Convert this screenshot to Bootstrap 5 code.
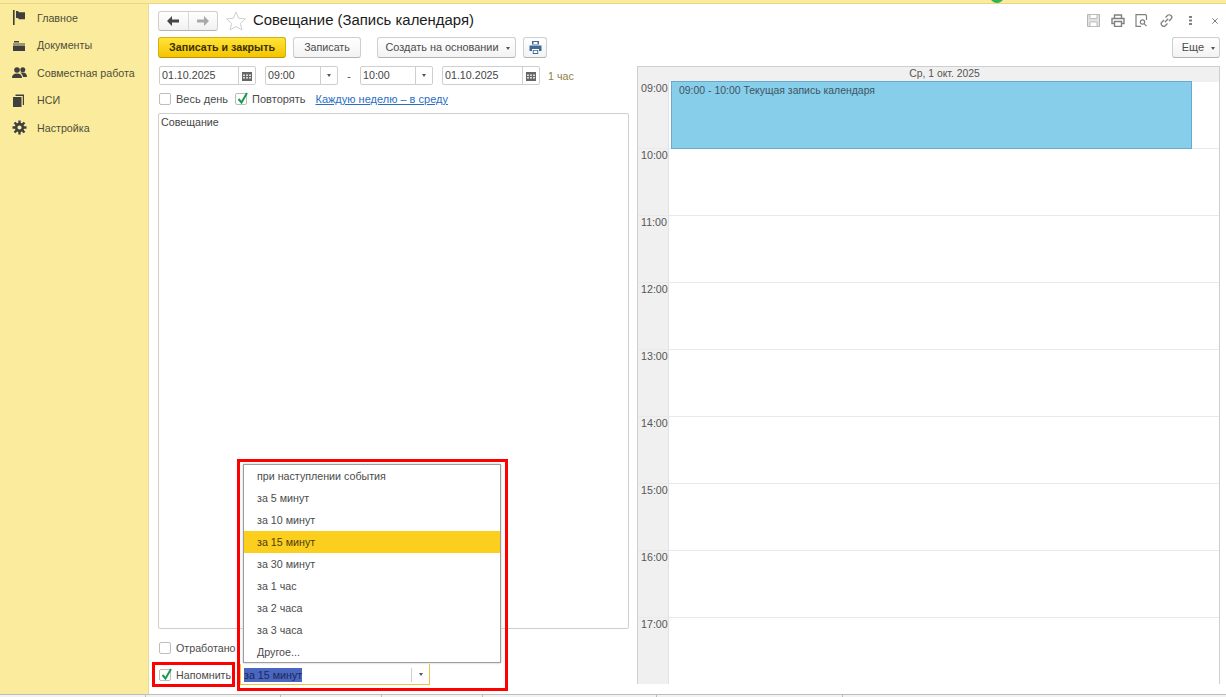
<!DOCTYPE html>
<html lang="ru">
<head>
  <meta charset="UTF-8" />
  <meta name="viewport" content="width=device-width, initial-scale=1" />
  <title>Совещание (Запись календаря)</title>
  <link href="https://cdn.jsdelivr.net/npm/bootstrap@5.3.3/dist/css/bootstrap.min.css" rel="stylesheet" />
  <style>
    html, body { height: 100%; }
    body {
      background: #fff;
      color: #4b4b4b;
      font-family: "Liberation Sans", Arial, sans-serif;
      font-size: 10.7px;
      line-height: 14px;
      overflow: hidden;
    }
    .app-shell { height: 697px; width: 1226px; }
    .top-strip {
      height: 4px;
      flex: none;
      background: #fbec9d;
      border-bottom: 1px solid #e6d68e;
      position: relative;
      overflow: hidden;
    }
    .top-dot {
      position: absolute;
      left: 990px;
      top: -11px;
      width: 14px;
      height: 14px;
      border-radius: 50%;
      background: #2fb457;
    }
    .work-area { height: 690px; flex: none; }
    .side-panel {
      width: 149px;
      flex: none;
      background: #fbec9d;
      border-right: 1px solid #e8dc9c;
    }
    .side-item {
      height: 27.5px;
      padding-left: 12px;
      color: #4e4c3c;
      text-decoration: none;
    }
    .side-item svg { width: 15px; height: 15px; margin-right: 10px; flex: none; }
    .form-pane { padding: 7px 6px 0 9px; min-width: 0; }
    .title-row { height: 19px; margin-bottom: 7px; }
    .nav-pair {
      width: 60px;
      height: 20px;
      border: 1px solid #cfcfcf;
      border-bottom-color: #b5b5b5;
      border-radius: 3px;
      background: linear-gradient(#fff, #f1f1f1);
    }
    .nav-pair span { flex: 1; }
    .nav-pair span + span { border-left: 1px solid #d8d8d8; }
    .star-mark { margin: 0 7px 0 8px; }
    .form-title { font-size: 14.9px; line-height: 19px; color: #1c1c1c; font-weight: 400; margin: 0; }
    .tool-icons { height: 14px; }
    .tool-icons svg { display: block; flex: none; }
    .gap-print { margin-left: 11px; }
    .gap-preview { margin-left: 10px; }
    .gap-link { margin-left: 12px; }
    .gap-kebab { margin-left: 16px; }
    .gap-close { margin-left: 20px; margin-right: 2px; }
    .tool-row { height: 21px; margin-bottom: 8px; }
    .btn-plain {
      height: 21px;
      padding: 0;
      font-size: 10.7px;
      line-height: 19px;
      color: #4b4b4b;
      background: linear-gradient(#fff, #f3f3f3);
      border: 1px solid #cfcfcf;
      border-bottom-color: #b3b3b3;
      border-radius: 3px;
      white-space: nowrap;
    }
    .btn-save {
      width: 128px;
      font-weight: 700;
      color: #3a3000;
      background: linear-gradient(#ffe43a, #f4c400);
      border-color: #d6ae10;
      border-bottom-color: #b8940a;
    }
    .btn-write { width: 68px; margin-left: 7px; }
    .btn-create { width: 139px; margin-left: 16px; font-size: 10.9px; padding-left: 2px; }
    .btn-print { width: 24px; margin-left: 7px; }
    .btn-more { width: 48px; padding-left: 5px; font-size: 11px; }
    .caret-down {
      display: inline-block;
      border-left: 2.5px solid transparent;
      border-right: 2.5px solid transparent;
      border-top: 3px solid #555;
      vertical-align: middle;
    }
    .content-row { height: 618px; }
    .edit-col { width: 471px; flex: none; margin-right: 8px; position: relative; }
    .field-row { height: 19px; margin-left: 1px; }
    .field-box {
      height: 19px;
      flex: none;
      border: 1px solid #cfcfcf;
      border-radius: 2px;
      color: #444;
      line-height: 17px;
      padding-left: 2px;
      background: #fff;
    }
    .field-box b {
      font-weight: 400;
      flex: none;
      width: 17px;
      margin-left: auto;
      height: 100%;
      border-left: 1px solid #cfcfcf;
      display: flex;
      align-items: center;
      justify-content: center;
    }
    .date-box { width: 97px; }
    .date-end { width: 98px; margin-left: 9px; }
    .time-box { width: 73px; }
    .time-start { margin-left: 9px; }
    .gap-dash { width: 22px; text-align: center; flex: none; }
    .span-note { color: #8c8248; margin-left: 8px; }
    .check-row { height: 14px; margin: 7px 0 7px 1px; font-size: 11px; }
    .check-mark {
      width: 12px;
      height: 12px;
      border: 1px solid #bdbdbd;
      border-radius: 2px;
      background: #fff;
      position: relative;
      display: inline-block;
      flex: none;
      margin-right: 5px;
    }
    .check-mark svg { position: absolute; left: 0; top: -3px; }
    .check-second { margin-left: 7px; }
    .repeat-link { color: #2a6fc4; text-decoration: underline; margin-left: 10px; }
    .note-area {
      height: 516px;
      flex: none;
      border: 1px solid #cfcfcf;
      border-radius: 2px;
      padding: 1px 2px;
      color: #444;
    }
    .worked-row { height: 14px; margin: 12px 0 12px 1px; }
    .remind-row { height: 15px; margin-left: 1px; }
    .remind-label { width: 64px; flex: none; }
    .remind-field {
      width: 190px;
      height: 21px;
      flex: none;
      padding-left: 3px;
      padding-top: 1px;
      border-bottom: 1px solid #f0c040;
      border-right: 1px solid #f0c040;
      border-left: 1px solid #f0c040;
    }
    .remind-field em { font-style: normal; background: #4a66c0; color: #1c2a58; }
    .remind-field b {
      font-weight: 400;
      margin-left: auto;
      width: 18px;
      height: 14px;
      border-left: 1px solid #cfcfcf;
      display: flex;
      align-items: center;
      justify-content: center;
    }
    /* popup list and the red marks lie over the form */
    .choice-list {
      position: absolute;
      left: 85px;
      top: 398px;
      width: 258px;
      height: 199px;
      background: #fff;
      border: 1px solid #9e9e9e;
      box-shadow: 0 0 2px #bbb;
      z-index: 3;
    }
    .choice-item { height: 22px; line-height: 22px; padding-left: 13px; color: #4b4b4b; }
    .choice-item.active-choice { background: #fccf1f; color: #4a3c10; }
    .red-frame { position: absolute; border: 3px solid #f00; z-index: 4; pointer-events: none; }
    .red-list { left: 79px; top: 393px; width: 271px; height: 232px; }
    .red-check { left: -6px; top: 596px; width: 83px; height: 25px; }
    .plan-col { flex: 1; min-width: 0; border: 1px solid #cfcfcf; border-bottom: 0; height: 618px; }
    .plan-head {
      height: 15px;
      padding-left: 32px;
      background: #f0f0f0;
      text-align: center;
      font-size: 10.4px;
      line-height: 14px;
      color: #555;
    }
    .plan-hour { height: 67px; position: relative; border-bottom: 1px solid #e9e9e9; }
    .plan-hour:last-child { border-bottom: 0; height: 66px; }
    .hour-label {
      width: 31px;
      flex: none;
      background: #f0f0f0;
      border-right: 1px solid #e2e2e2;
      padding: 0 0 0 3px;
      line-height: 13px;
      color: #555;
    }
    .plan-cell { flex: 1; position: relative; }
    .event-block {
      position: absolute;
      left: 2px;
      top: -1px;
      width: 521px;
      height: 68px;
      background: #87ceeb;
      border: 1px solid #6aa9cf;
      padding: 2px 7px;
      font-size: 10.45px;
      color: #3f5560;
      white-space: nowrap;
    }
    .bottom-strip {
      height: 3px;
      flex: none;
      border-top: 1px solid #bdbdbd;
      background: #f3f3f3;
    }
    .bottom-tab { border-right: 1px solid #bdbdbd; flex: none; }
    .tab-a { width: 146px; }
    .tab-b { width: 135px; }
    .tab-c { width: 101px; }
    .tab-d { width: 174px; }
    .tab-e { width: 186px; }
  </style>
</head>
<body>
  <div class="app-shell d-flex flex-column">
    <div class="top-strip"><span class="top-dot"></span></div>

    <div class="work-area d-flex">
      <nav class="side-panel">
        <a href="#" class="side-item d-flex align-items-center">
          <svg viewBox="0 0 15 15"><path fill="#3f3f3f" d="M1 0h1.600v15H1zM4 1h2l1 1.200h6v7H7L6 8H4z"/></svg>Главное</a>
        <a href="#" class="side-item d-flex align-items-center">
          <svg viewBox="0 0 15 15"><path fill="#3f3f3f" d="M2 3h5v1.500H2zM1 5.500h12v1H1zM1 7.500h12V13H1z"/></svg>Документы</a>
        <a href="#" class="side-item d-flex align-items-center">
          <svg viewBox="0 0 15 15"><circle cx="5" cy="5" r="2.800" fill="#3f3f3f"/><circle cx="10.800" cy="4.800" r="2.500" fill="#3f3f3f"/><path fill="#3f3f3f" d="M0 13c0-3 1.500-4.500 5-4.500S10 10 10 13zM8.200 7.800c.8-.3 1.600-.4 2.600-.4 2.900 0 4.200 1.500 4.200 4.600h-4c-.3-1.900-1.200-3.300-2.800-4.200z"/></svg>Совместная работа</a>
        <a href="#" class="side-item d-flex align-items-center">
          <svg viewBox="0 0 15 15"><path fill="#3f3f3f" d="M1 4h8.500v10H1zM3.500 1.500H12V12h-1.200V3H3.500z"/></svg>НСИ</a>
        <a href="#" class="side-item d-flex align-items-center">
          <svg viewBox="0 0 15 15"><circle cx="7.500" cy="7.500" r="3.400" fill="none" stroke="#3f3f3f" stroke-width="2.600"/><path stroke="#3f3f3f" stroke-width="2.400" d="M7.500.5v3M7.500 11.500v3M.5 7.500h3M11.500 7.500h3M2.500 2.500l2.100 2.100M10.400 10.400l2.100 2.100M12.500 2.500l-2.100 2.100M4.600 10.400l-2.100 2.100"/></svg>Настройка</a>
      </nav>

      <main class="form-pane flex-grow-1">
        <div class="title-row d-flex align-items-center">
          <div class="nav-pair d-flex align-items-stretch">
            <span class="d-flex align-items-center justify-content-center">
              <svg width="12" height="10" viewBox="0 0 12 10"><path fill="#444" d="M5 0v3.500h7v3H5V10L0 5z"/></svg></span>
            <span class="d-flex align-items-center justify-content-center">
              <svg width="12" height="10" viewBox="0 0 12 10"><path fill="#a9a9a9" d="M7 0v3.500H0v3h7V10l5-5z"/></svg></span>
          </div>
          <svg class="star-mark" width="20" height="20" viewBox="0 0 20 20"><path fill="#fff" stroke="#cfcfcf" d="M10 1l2.700 6.300 6.800.6-5.100 4.500 1.500 6.600L10 15.500 4.100 19l1.500-6.600L.5 7.900l6.800-.6z"/></svg>
          <h1 class="form-title">Совещание (Запись календаря)</h1>
          <div class="tool-icons ms-auto d-flex align-items-center">
            <svg width="13" height="13" viewBox="0 0 13 13"><path fill="#e2e2e2" stroke="#b5b5b5" d="M.5.500h12v12H.5z"/><path fill="#fff" stroke="#bdbdbd" d="M3 .500h7v4H3zM3 8h7v4.500H3z"/></svg>
            <svg class="gap-print" width="14" height="13" viewBox="0 0 14 13"><path fill="none" stroke="#808080" stroke-width="1.400" d="M3.500 4V1h7v3M3.500 9.500H1V4.500h12v5h-2.500M3.500 7.500h7v5h-7z"/></svg>
            <svg class="gap-preview" width="13" height="13" viewBox="0 0 13 13"><path fill="none" stroke="#808080" stroke-width="1.200" d="M6 12.400H1V.600h9.500l1 1V6"/><circle cx="7.500" cy="8" r="2.200" fill="none" stroke="#808080" stroke-width="1.200"/><path stroke="#808080" stroke-width="1.300" d="M9 9.600l2.500 2.500"/></svg>
            <svg class="gap-link" width="13" height="13" viewBox="0 0 13 13"><path fill="none" stroke="#808080" stroke-width="1.300" d="M5.500 3.500l2-2a2.300 2.300 0 0 1 3.500 3.500l-2 2M7.500 9.500l-2 2A2.300 2.300 0 0 1 2 8l2-2M4.800 8.200l3.400-3.400"/></svg>
            <svg class="gap-kebab" width="3" height="9" viewBox="0 0 3 9"><path fill="#808080" d="M0 0h3v2H0zM0 3.500h3v2H0zM0 7h3v2H0z"/></svg>
            <svg class="gap-close" width="6" height="6" viewBox="0 0 6 6"><path stroke="#808080" stroke-width="1" d="M.3.300l5.400 5.400M5.700.300L.3 5.700"/></svg>
          </div>
        </div>

        <div class="tool-row d-flex align-items-start">
          <button type="button" class="btn btn-plain btn-save">Записать и закрыть</button>
          <button type="button" class="btn btn-plain btn-write">Записать</button>
          <button type="button" class="btn btn-plain btn-create">Создать на основании <i class="caret-down ms-1"></i></button>
          <button type="button" class="btn btn-plain btn-print d-flex align-items-center justify-content-center">
            <svg width="13" height="13" viewBox="0 0 13 13"><path fill="#3f6a96" d="M3 0h7v3.500H3zM.5 4.500h12V10H10V8H3v2H.5zM3.800 9h5.400v4H3.800z"/><path fill="#fff" d="M4.500 1h4v2h-4zM4.700 9.800h3.600V12H4.700z"/></svg>
          </button>
          <button type="button" class="btn btn-plain btn-more ms-auto">Еще <i class="caret-down ms-1"></i></button>
        </div>

        <div class="content-row d-flex">
          <section class="edit-col d-flex flex-column">
            <div class="field-row d-flex align-items-center">
              <div class="field-box date-box d-flex align-items-center">01.10.2025<b><svg width="10" height="10" viewBox="0 0 10 10"><path fill="#666" d="M0 1h10v9H0z"/><path fill="#ddd" d="M1 3.500h2v1.500H1zM4 3.500h2v1.500H4zM7 3.500h2v1.500H7zM1 6h2v1.500H1zM4 6h2v1.500H4zM7 6h2v1.500H7z"/></svg></b></div>
              <div class="field-box time-box time-start d-flex align-items-center">09:00<b><i class="caret-down"></i></b></div>
              <span class="gap-dash">-</span>
              <div class="field-box time-box d-flex align-items-center">10:00<b><i class="caret-down"></i></b></div>
              <div class="field-box date-end d-flex align-items-center">01.10.2025<b><svg width="10" height="10" viewBox="0 0 10 10"><path fill="#666" d="M0 1h10v9H0z"/><path fill="#ddd" d="M1 3.500h2v1.500H1zM4 3.500h2v1.500H4zM7 3.500h2v1.500H7zM1 6h2v1.500H1zM4 6h2v1.500H4zM7 6h2v1.500H7z"/></svg></b></div>
              <span class="span-note">1 час</span>
            </div>

            <div class="check-row d-flex align-items-center">
              <span class="check-mark"></span><span>Весь день</span>
              <span class="check-mark check-second"><svg width="13" height="15" viewBox="0 0 13 15"><path fill="none" stroke="#1a9a4a" stroke-width="2" d="M2.500 8l3 3.500L11 2"/></svg></span><span>Повторять</span>
              <a href="#" class="repeat-link">Каждую неделю – в среду</a>
            </div>

            <div class="note-area">Совещание</div>

            <div class="worked-row d-flex align-items-center">
              <span class="check-mark"></span><span>Отработано</span>
            </div>

            <div class="remind-row d-flex align-items-center">
              <span class="check-mark"><svg width="13" height="15" viewBox="0 0 13 15"><path fill="none" stroke="#1a9a4a" stroke-width="2" d="M2.500 8l3 3.500L11 2"/></svg></span><span class="remind-label">Напомнить:</span>
              <div class="remind-field d-flex align-items-center"><em>за 15 минут</em><b><i class="caret-down"></i></b></div>
            </div>

            <div class="choice-list">
              <div class="choice-item">при наступлении события</div>
              <div class="choice-item">за 5 минут</div>
              <div class="choice-item">за 10 минут</div>
              <div class="choice-item active-choice">за 15 минут</div>
              <div class="choice-item">за 30 минут</div>
              <div class="choice-item">за 1 час</div>
              <div class="choice-item">за 2 часа</div>
              <div class="choice-item">за 3 часа</div>
              <div class="choice-item">Другое...</div>
            </div>
            <div class="red-frame red-list"></div>
            <div class="red-frame red-check"></div>
          </section>

          <section class="plan-col">
            <div class="plan-head">Ср, 1 окт. 2025</div>
            <div class="plan-hour d-flex"><div class="hour-label">09:00</div><div class="plan-cell"><div class="event-block">09:00 - 10:00 Текущая запись календаря</div></div></div>
            <div class="plan-hour d-flex"><div class="hour-label">10:00</div><div class="plan-cell"></div></div>
            <div class="plan-hour d-flex"><div class="hour-label">11:00</div><div class="plan-cell"></div></div>
            <div class="plan-hour d-flex"><div class="hour-label">12:00</div><div class="plan-cell"></div></div>
            <div class="plan-hour d-flex"><div class="hour-label">13:00</div><div class="plan-cell"></div></div>
            <div class="plan-hour d-flex"><div class="hour-label">14:00</div><div class="plan-cell"></div></div>
            <div class="plan-hour d-flex"><div class="hour-label">15:00</div><div class="plan-cell"></div></div>
            <div class="plan-hour d-flex"><div class="hour-label">16:00</div><div class="plan-cell"></div></div>
            <div class="plan-hour d-flex"><div class="hour-label">17:00</div><div class="plan-cell"></div></div>
          </section>
        </div>
      </main>
    </div>

    <div class="bottom-strip d-flex">
      <span class="bottom-tab tab-a"></span>
      <span class="bottom-tab tab-b"></span>
      <span class="bottom-tab tab-c"></span>
      <span class="bottom-tab tab-c"></span>
      <span class="bottom-tab tab-d"></span>
      <span class="bottom-tab tab-e"></span>
    </div>
  </div>
  <script src="https://cdn.jsdelivr.net/npm/bootstrap@5.3.3/dist/js/bootstrap.bundle.min.js"></script>
</body>
</html>
